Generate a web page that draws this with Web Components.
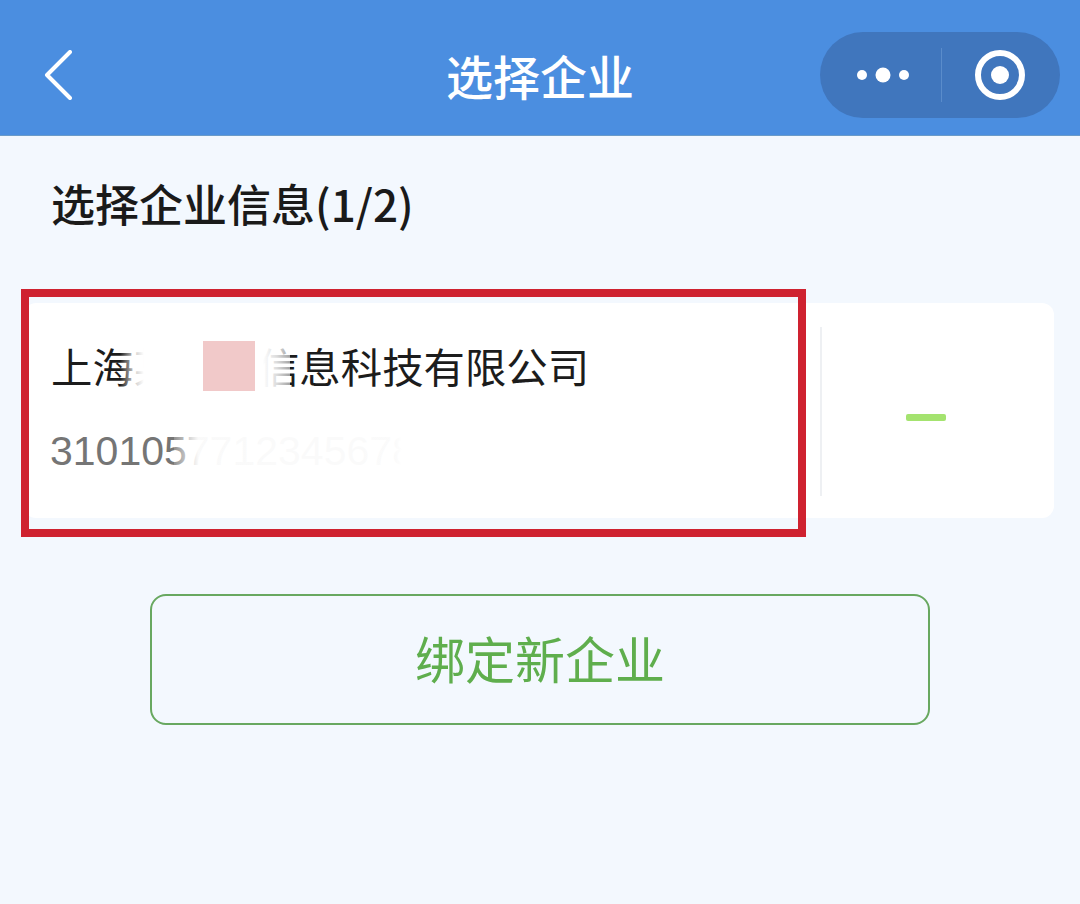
<!DOCTYPE html>
<html lang="zh">
<head>
<meta charset="utf-8">
<title>选择企业</title>
<style>
  html, body { margin: 0; padding: 0; }
  body {
    width: 1080px;
    height: 904px;
    overflow: hidden;
    background: #f3f8fe;
    font-family: "Noto Sans CJK SC", "Liberation Sans", sans-serif;
  }
</style>
</head>
<body>
<app-nav title-text="选择企业"></app-nav>
<app-page heading="选择企业信息(1/2)">
  <company-card name="上海某某某信息科技有限公司" code="310105771234567890"></company-card>
  <bind-button>绑定新企业</bind-button>
</app-page>

<script>
class AppNav extends HTMLElement {
  constructor() {
    super();
    this.attachShadow({ mode: "open" });
    this.shadowRoot.innerHTML = `<style>
      :host {
        display: grid;
        grid-template-columns: 240px 1fr 240px;
        align-items: center;
        height: 121px;
        padding: 14px 20px 0;
        background: #4b8ee0;
        border-bottom: 1px solid #6a9bc9;
        color: #fff;
      }
      .back { display: block; width: 28px; height: 50px; margin-left: 24px; }
      h1 {
        margin: 0;
        text-align: center;
        font: 500 47px/1 "Noto Sans CJK SC", sans-serif;
      }
      .capsule {
        display: flex;
        align-items: center;
        box-sizing: border-box;
        width: 240px;
        height: 86px;
        padding-left: 36px;
        border-radius: 43px;
        background: #4076bd;
      }
      .dots { display: block; width: 54px; height: 16px; }
      .sep { width: 1px; height: 54px; margin: 0 32px 0 31px; background: #5a8ccb; }
      .target { display: block; width: 52px; height: 52px; }
    </style>
    <svg class="back" viewBox="0 0 28 50" fill="none" stroke="#fff" stroke-width="4" stroke-linecap="round" stroke-linejoin="round">
      <path d="M26 2 3 25l23 23"/>
    </svg>
    <h1></h1>
    <div class="capsule">
      <svg class="dots" viewBox="0 0 54 16" fill="#fff">
        <circle cx="6" cy="8" r="5"/><circle cx="27" cy="8" r="7.5"/><circle cx="48" cy="8" r="5"/>
      </svg>
      <div class="sep"></div>
      <svg class="target" viewBox="0 0 52 52" fill="none">
        <circle cx="26" cy="26" r="22" stroke="#fff" stroke-width="6"/>
        <circle cx="26" cy="26" r="9" fill="#fff"/>
      </svg>
    </div>`;
  }
  connectedCallback() {
    this.shadowRoot.querySelector("h1").textContent = this.getAttribute("title-text");
  }
}

class AppPage extends HTMLElement {
  constructor() {
    super();
    this.attachShadow({ mode: "open" });
    this.shadowRoot.innerHTML = `<style>
      :host { display: block; padding: 41px 26px 0 24px; }
      h2 {
        margin: 0 0 74px 27px;
        font: 500 44px/52px "Noto Sans CJK SC", sans-serif;
        color: #1a1a1a;
      }
    </style>
    <h2></h2>
    <slot></slot>`;
  }
  connectedCallback() {
    this.shadowRoot.querySelector("h2").textContent = this.getAttribute("heading");
  }
}

class CompanyCard extends HTMLElement {
  constructor() {
    super();
    this.attachShadow({ mode: "open" });
    this.shadowRoot.innerHTML = `<style>
      :host {
        display: flex;
        position: relative;
        box-sizing: border-box;
        height: 215px;
        background: #fff;
        border-radius: 12px;
      }
      .info { flex: 1; padding: 37px 0 0 27px; min-width: 0; }
      .name {
        font: 400 41.4px/50px "Noto Sans CJK SC", sans-serif;
        color: #1c1c1c;
        white-space: nowrap;
      }
      .code {
        margin: 36px 0 0 -1px;
        font: 400 41px/50px "Liberation Sans", Arial, sans-serif;
        color: #757575;
        white-space: nowrap;
      }
      .side {
        flex: none;
        width: 232px;
        margin: 24px 0 22px;
        border-left: 2px solid #eef0f3;
        display: flex;
        align-items: center;
        justify-content: center;
      }
      .dash { width: 40px; height: 7px; border-radius: 2px; background: #a4e36f; margin: 12px 24px 0 0; }
      /* annotation and mosaic pieces sit over the card */
      .frame {
        position: absolute;
        left: -3px; top: -14px;
        width: 785px; height: 248px;
        box-sizing: border-box;
        border: 8px solid #cf2230;
      }
      .mask { position: absolute; }
      .m1 { left: 96px; top: 30px; width: 170px; height: 66px;
            background: linear-gradient(90deg, rgba(255,255,255,0), rgba(255,255,255,.75) 8%, #fff 14%, #fff 84%, rgba(255,255,255,.85) 92%, rgba(255,255,255,.6)); }
      .m2 { left: 179px; top: 38px; width: 52px; height: 50px; background: #f1c9c9; }
      .m3 { left: 150px; top: 122px; width: 300px; height: 64px;
            background: linear-gradient(90deg, rgba(255,255,255,.2), rgba(255,255,255,.96) 8%, rgba(255,255,255,.97) 74%, #fff 76%); }
    </style>
    <div class="info">
      <div class="name"></div>
      <div class="code"></div>
    </div>
    <div class="side"><div class="dash"></div></div>
    <div class="mask m1"></div>
    <div class="mask m2"></div>
    <div class="mask m3"></div>
    <div class="frame"></div>`;
  }
  connectedCallback() {
    this.shadowRoot.querySelector(".name").textContent = this.getAttribute("name");
    this.shadowRoot.querySelector(".code").textContent = this.getAttribute("code");
  }
}

class BindButton extends HTMLElement {
  constructor() {
    super();
    this.attachShadow({ mode: "open" });
    this.shadowRoot.innerHTML = `<style>
      :host {
        display: flex;
        align-items: center;
        justify-content: center;
        box-sizing: border-box;
        width: 780px;
        height: 131px;
        margin: 76px 0 0 126px;
        padding-bottom: 5px;
        border: 2.5px solid #68a860;
        border-radius: 16px;
        color: #5fae4d;
        font: 400 50px/1 "Noto Sans CJK SC", sans-serif;
      }
    </style><slot></slot>`;
  }
}

customElements.define("app-nav", AppNav);
customElements.define("app-page", AppPage);
customElements.define("company-card", CompanyCard);
customElements.define("bind-button", BindButton);
</script>
</body>
</html>
